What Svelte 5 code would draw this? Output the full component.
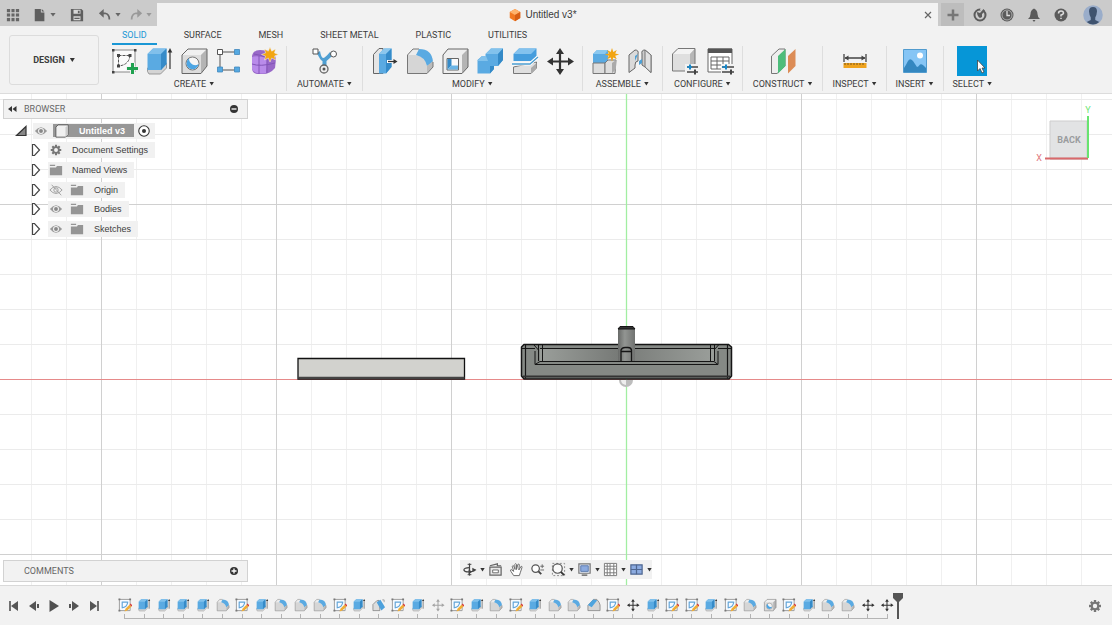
<script>
  let activeTab = $state('SOLID');
  let selectedNode = $state('Untitled v3');

  const tabs = ['SOLID', 'SURFACE', 'MESH', 'SHEET METAL', 'PLASTIC', 'UTILITIES'];

  const groups = [
    { name: 'CREATE', tools: ['sketch', 'extrude', 'hole', 'pattern', 'form'] },
    { name: 'AUTOMATE', tools: ['automate'] },
    { name: 'MODIFY', tools: ['pressPull', 'fillet', 'shell', 'combine', 'split', 'move'] },
    { name: 'ASSEMBLE', tools: ['component', 'joint'] },
    { name: 'CONFIGURE', tools: ['configure', 'configTable'] },
    { name: 'CONSTRUCT', tools: ['plane'] },
    { name: 'INSPECT', tools: ['measure'] },
    { name: 'INSERT', tools: ['picture'] },
    { name: 'SELECT', tools: ['select'] }
  ];

  const nodes = [
    { name: 'Document Settings', icon: 'gear' },
    { name: 'Named Views', icon: 'folder' },
    { name: 'Origin', icon: 'folder', eye: 'eyeOff' },
    { name: 'Bodies', icon: 'folder', eye: 'eye' },
    { name: 'Sketches', icon: 'folder', eye: 'eye' }
  ];

  const navTools = [
    { name: 'orbit', menu: true },
    { name: 'lookAt' },
    { name: 'pan' },
    { name: 'zoom' },
    { name: 'fit', menu: true },
    { name: 'display', menu: true },
    { name: 'grid', menu: true },
    { name: 'viewports', menu: true }
  ];

  const playback = ['first', 'previous', 'play', 'next', 'last'];

  // s = sketch, e = extrude, f = fillet, c = chamfer, d = draft, h = hole, m = move, x = suppressed move
  const features = [...'seeeefsefffsedsexsefseffcsmessesfhseffmm'];
  const featureIcons = {
    s: 'editSketch', e: 'extrude', f: 'fillet', c: 'chamfer',
    d: 'draft', h: 'hole', m: 'move', x: 'move'
  };

  const minorX = Array.from({ length: 32 }, (_, i) => 31 + i * 35).filter((x) => (x - 101) % 175 !== 0);
  const majorX = [101, 276, 451, 801, 976];
  const minorY = Array.from({ length: 14 }, (_, i) => 99 + i * 35).filter((y) => (y - 204) % 175 !== 0);
  const majorY = [204, 554];

  const icons = {
    sketch: `<path d="M4 4H26V26H4Z" fill="#fafafa" stroke="#888"/><path d="M9.5 9.5H21M9.5 9.5V20M21 9.5Q20 19 9.5 20" fill="none" stroke="#555" stroke-dasharray="3 1"/><path d="M3 3h2.5v2.5H3zM25 3h2.5v2.5H25zM3 25h2.5v2.5H3zM8 8h3v3H8zM19.500 8h3v3h-3zM8 18.500h3v3H8z" fill="#444"/><path d="M17 20.500h4v-4h5v4h4v4h-4v4h-5v-4h-4z" fill="#f2f2f2"/><path d="M18 21h4v-4h3v4h4v3h-4v4h-3v-4h-4z" fill="#20a150"/>`,
    editSketch: `<path d="M3 3H26V27H3Z" fill="#f7fbff" stroke="#999" stroke-width="2"/><path d="M8 9H21M9 8V21M21 8Q20 20 8 21" fill="none" stroke="#63a5d8" stroke-width="2.500"/><path d="M1 1h4v4H1zM24 1h4v4h-4zM1 25h4v4H1z" fill="#777"/><path d="M14 29l2-6 9-9 4 4-9 9z" fill="#f0ad36"/><path d="M25 14l2-2 4 4-2 2z" fill="#d93b3b"/>`,
    extrude: `<path d="M3.500 22V25.500L5 28H16.500L22.500 22V17Z" fill="#d4d4d4" stroke="#888" stroke-width=".8"/><path d="M3.500 8L9 2.500H22.500V18L17 24H3.500Z" fill="#5aaae2"/><path d="M3.500 8L9 2.500H22.500L17 8Z" fill="#81c0eb"/><path d="M17 8L22.500 2.500V18L17 24Z" fill="#368bc8"/><path d="M26 4V23" stroke="#333" stroke-width="1.200"/><path d="M26 2l2.300 4.500h-4.600z" fill="#333"/>`,
    hole: `<path d="M3 9L9 3H28V20L22 27.500H3Z" fill="#dcdcdc"/><path d="M3 9L9 3H28L22 9Z" fill="#f0f0f0"/><path d="M22 9L28 3V20L22 27Z" fill="#b4b4b4"/><path d="M3 9L9 3H28V20L22 27.500H3Z" fill="none" stroke="#666"/><circle cx="13.500" cy="17.500" r="6.500" fill="#f5f5f5" stroke="#777"/><path d="M10 12.500A6 6 0 1 0 19.500 18C16 21 10 18 10 12.500Z" fill="#4ca5e3"/>`,
    pattern: `<path d="M6 6H24M6 6V24H24" fill="none" stroke="#555"/><path d="M3.500 3.500h5v5h-5z" fill="#fff" stroke="#555"/><path d="M20.500 3.500h5v5h-5zM3.500 21h5v5h-5zM20.500 21h5v5h-5z" fill="#55a9e2" stroke="#4188bc" stroke-width=".8"/>`,
    form: `<path d="M3 10Q4 4 11 4L22 5Q26 8 27 13L26 22Q21 28 14 28H8Q3 27 3 22Z" fill="#9868c8"/><path d="M3 11Q7 9 18 12L17 27Q5 29 3 23Z" fill="#b98bea"/><path d="M3 18Q11 21 26 17M10 10V28M18 12V27M5 8Q13 9 18 12" fill="none" stroke="#8355b8"/><path d="M21 1l1.700 4.200L26.500 3l-1 4 4 1.500-4 1.500 1 4-3.800-2L21 16l-1.700-4-3.800 2 1-4-4-1.500 4-1.500-1-4 3.800 2.200z" fill="#f2a512" stroke="#f2f2f2" stroke-width=".5"/>`,
    automate: `<path d="M8 7Q11 14 13.500 15V22H17.500V15Q20 13 24 9L21 6Q16 12 14 12Q12 11 11 5Z" fill="#4f9fd2"/><path d="M4 3h5v5H4z" fill="#fff" stroke="#555"/><circle cx="24.500" cy="8" r="3" fill="#fff" stroke="#555"/><circle cx="15" cy="23" r="4" fill="#eee" stroke="#666" stroke-width="1.300"/><circle cx="15" cy="23" r="1.500" fill="#555"/>`,
    pressPull: `<path d="M3.500 8.500L9 2.500H13V27.500H3.500Z" fill="#e5e5e5" stroke="#666"/><path d="M9 8L14 2.500H21.500V21L16 27.500H9Z" fill="#5aaae2"/><path d="M9 8L14 2.500H21.500L16 8Z" fill="#8cc7ed"/><path d="M16 8L21.500 2.500V21L16 27.500Z" fill="#358bc9"/><path d="M17 15.500H25" stroke="#fff" stroke-width="3"/><path d="M18 15.500H24" stroke="#333" stroke-width="1.300"/><path d="M27.500 15.500l-4-2.500v5z" fill="#333"/>`,
    fillet: `<path d="M2.500 9L8 3H14Q27 3 28 15V21L22 27.500H2.500Z" fill="#ececec"/><path d="M2.500 9H10Q20 10 22 20V27.500H2.500Z" fill="#d6d6d6"/><path d="M14 3Q27 3 28 16L22 20Q20 11 11 9Z" fill="#5aaae2"/><path d="M22 20L28 15V21L22 27.500Z" fill="#bbb"/><path d="M14 3H8L2.500 9V27.500H22L28 21V16" fill="none" stroke="#777"/>`,
    chamfer: `<path d="M2 16L14 3H21Q27 9 28 15V27H2Z" fill="#d5d5d5" stroke="#777" stroke-width="1.500"/><path d="M2 15L13 3L22 5L10 20Z" fill="#4da4df"/>`,
    draft: `<path d="M2 25V14L10 6L15 5L17 27H2Z" fill="#ddd" stroke="#777" stroke-width="1.500"/><path d="M10 9L18 4L28 20L20 27Z" fill="#4da1dc"/><path d="M22 4h4v5" fill="none" stroke="#888" stroke-width="1.500"/>`,
    shell: `<path d="M3 9L8 3H28V21L22 27.500H3Z" fill="#eee"/><path d="M22 9L28 3V21L22 27.500Z" fill="#b4b4b4"/><path d="M3 9L8 3H28V21L22 27.500H3Z" fill="none" stroke="#666"/><path d="M7 12.500H18.500V24H7Z" fill="#fafafa" stroke="#666"/><path d="M7.500 13L11.500 13V19.500L7.500 23.500Z" fill="#368bc8"/><path d="M7.500 23.500L11.500 19.500H18V23.500Z" fill="#6bb5e6"/>`,
    combine: `<path d="M2.500 14L7 10H10.500V8L16 2.500H28V14L23 20H19V23L15 27.500H2.500Z" fill="#5aaae2"/><path d="M10.500 8L16 2.500H28L23 8ZM2.500 15L7 10H11L13 15Z" fill="#82c2ec"/><path d="M23 8L28 2.500V14L23 20ZM15 20H19V23L15 27.500Z" fill="#348ac7"/>`,
    split: `<path d="M3.500 21V27.500H21L26.500 22V16Z" fill="#dfdfdf" stroke="#777"/><path d="M21 22L26.500 17V22L21 27.500Z" fill="#aaa"/><path d="M3.500 8L9 2.500H26.500V10L21 15H3.500Z" fill="#459ddd"/><path d="M3.500 8L9 2.500H26.500L21 8Z" fill="#83c2ee"/><path d="M2 18H20L28 11" fill="none" stroke="#fff" stroke-width="3"/><path d="M2 18H20L28 11" fill="none" stroke="#4a9ccf" stroke-width="1.300"/>`,
    move: `<path d="M15 5V26M5 15.500H26" stroke="#333" stroke-width="2.200"/><path d="M15 2l4 6h-8zM15 29l4-6h-8zM2 15.500l6-4v8zM29 15.500l-6-4v8z" fill="#333"/>`,
    component: `<path d="M3 8L7 4H18V17H3Z" fill="#5aaae2"/><path d="M3 8L7 4H18L15 8Z" fill="#8bc8ef"/><path d="M3 17H15V27.500H3Z" fill="#ddd" stroke="#777"/><path d="M15 17L18 14H26L25 27.500H15Z" fill="#dedede" stroke="#777"/><path d="M22 17L26 14V23L22 27.500" fill="#aaa"/><path d="M22 2l1.300 4 3.500-2-1.600 3.500 4 1-4 1.200 1.600 3.500-3.500-1.600-1.300 4-1.300-4-3.500 1.600 1.600-3.500-4-1.200 4-1-1.600-3.500 3.500 2z" fill="#f2a512"/>`,
    joint: `<path d="M4 9L10 4Q14 4 13 8V15Q10 15 10 19V22L4 26.500Z" fill="#dadada" stroke="#666"/><path d="M26 9L20 4Q16 4 17 8V19L20 21L26 26.500Z" fill="#ccc" stroke="#666"/><path d="M20 4V21L26 26.500V9Z" fill="#e2e2e2" stroke="#777"/><path d="M10 15V10L13 8M17 13l-3 2v4l3-2z" fill="#4ca0d5"/>`,
    configure: `<path d="M2.500 8L8 2.500H25V19L20 25H2.500Z" fill="#dfdfdf"/><path d="M2.500 8L8 2.500H25L20 8Z" fill="#f3f3f3"/><path d="M20 8L25 2.500V19L20 25Z" fill="#b7b7b7"/><path d="M2.500 8L8 2.500H25V19L20 25H2.500Z" fill="none" stroke="#777"/><path d="M15 18H30V30H15Z" fill="#f2f2f2"/><path d="M17 21H28M17 26H28" stroke="#444" stroke-width="1.300"/><path d="M17 21h5" stroke="#1687c9" stroke-width="1.500"/><path d="M20 18.500v5" stroke="#1687c9" stroke-width="2"/><path d="M25 23.500v5" stroke="#444" stroke-width="2"/>`,
    configTable: `<path d="M3 3H27V26H3Z" fill="#fff" stroke="#666"/><path d="M3 2.500H27V7H3Z" fill="#555"/><path d="M6 11H24V23H6ZM6 15H24M6 19H24M12 11V23M18 11V23" fill="none" stroke="#666"/><path d="M16 18H30V30H16Z" fill="#f2f2f2"/><path d="M17 21H29M17 26H29" stroke="#444" stroke-width="1.300"/><path d="M17 21h5" stroke="#1687c9" stroke-width="1.500"/><path d="M21 18.500v5" stroke="#1687c9" stroke-width="2"/><path d="M26 23.500v5" stroke="#444" stroke-width="2"/>`,
    plane: `<path d="M3.500 10L11 3H17V20L9 27.500H3.500Z" fill="#eee" stroke="#777"/><path d="M10 10L17.500 3V20L10 27.500Z" fill="#4dbd7b"/><path d="M20 10L27.500 3V20L20 27.500Z" fill="#dc8c56"/>`,
    measure: `<path d="M4 8V16M26 8V16M5 12H25" stroke="#444" stroke-width="1.300"/><path d="M4.500 12l4-2.500v5zM25.500 12l-4-2.500v5z" fill="#444"/><path d="M3.500 17H26.500V22H3.500Z" fill="#efa31d"/><path d="M5 17v2M8 17v2M11 17v2M14 17v2M17 17v2M20 17v2M23 17v2" stroke="#7b561d"/>`,
    picture: `<path d="M3.500 3.500H26.500V26.500H3.500Z" fill="#86c5f5" stroke="#519bce"/><circle cx="20" cy="9.500" r="3" fill="#fff"/><path d="M4 22Q6 19 8 15Q10 11.500 13 15Q15 18 17 21Q18 21 20 18.500Q22 17 26 22V26H4Z" fill="#3487c0"/>`,
    select: `<path d="M0 0H30V30H0Z" fill="#0696d7"/><path d="M20.500 14V25L23 22.500L25 27L27 26L25 22H28Z" fill="#fff" stroke="#444" stroke-width=".8"/>`,

    apps: `<path d="M1 1h4v4H1zM6 1h4v4H6zM11 1h4v4h-4zM1 6h4v4H1zM6 6h4v4H6zM11 6h4v4h-4zM1 11h4v4H1zM6 11h4v4H6zM11 11h4v4h-4z" fill="#666"/><path d="M5.500 0V16M10.500 0V16M0 5.500H16M0 10.500H16" stroke="#cbcbcb"/>`,
    file: `<path d="M2 1H9V5H13V15H2ZM10 1L13 4H10Z" fill="#5f5f5f"/>`,
    save: `<path d="M1 1H13L15 3V15H1Z" fill="#5f5f5f"/><path d="M4 2H12V6.500H4ZM4 9.500H12V14H4Z" fill="#d6d6d6"/><path d="M9 3h2v3H9zM5 11h6v1.500H5z" fill="#5f5f5f"/>`,
    undo: `<path d="M4 6H8Q13 7 13 13" fill="none" stroke="#666" stroke-width="2"/><path d="M1 6L6.500 1V11Z" fill="#666"/>`,
    redo: `<path d="M12 6H8Q3 7 3 13" fill="none" stroke="#999" stroke-width="2"/><path d="M15 6L9.500 1V11Z" fill="#999"/>`,
    doc: `<path d="M8 1L14 4.500V11.500L8 15L2 11.500V4.500Z" fill="#f37921"/><path d="M8 1L14 4.500L8 8L2 4.500Z" fill="#ffb36d"/><path d="M8 8L14 4.500V11.500L8 15Z" fill="#d65e14"/>`,
    close: `<path d="M5 5L11 11M11 5L5 11" stroke="#666" stroke-width="1.200"/>`,
    plus: `<path d="M8 2.500V13.500M2.500 8H13.500" stroke="#777" stroke-width="2.500"/>`,
    extensions: `<circle cx="8" cy="8" r="5.500" fill="none" stroke="#5b5b5b" stroke-width="2"/><path d="M9 0L12 3L10 5L8 3Z" fill="#cbcbcb"/><path d="M5 5L8 6L11.500 2L13 4L10 7V10L8 11Q5 9 5 5Z" fill="#5b5b5b"/>`,
    clock: `<circle cx="8" cy="8" r="6.500" fill="#5b5b5b"/><circle cx="8" cy="8" r="5" fill="none" stroke="#ccc" stroke-width=".7"/><path d="M8 4V8.500H11" fill="none" stroke="#ddd" stroke-width="1.300"/>`,
    bell: `<path d="M2 12Q4.500 10 4.500 7Q4.500 3 8 1.500Q11.500 3 11.500 7Q11.500 10 14 12ZM6.500 13H9.500L8 15Z" fill="#5b5b5b"/>`,
    help: `<circle cx="8" cy="8" r="6.500" fill="#5b5b5b"/><path d="M5.500 6.500Q5.500 4 8 4Q10.500 4 10.500 6.200Q10 7.500 8 8V9.500M8 10.700V12" fill="none" stroke="#ddd" stroke-width="1.500"/>`,
    avatar: `<circle cx="8" cy="8" r="7.800" fill="#9aadca"/><path d="M4.800 5Q4.800 1.500 8 1.500Q11.200 1.500 11.200 5Q11 8 9.800 10V12L13 13.500Q8 17.500 3 13.500L6.200 12V10Q5 8 4.800 5Z" fill="#3f536f"/>`,

    eye: `<path d="M1 8Q8 -.5 15 8Q8 16.500 1 8Z" fill="#999"/><circle cx="8" cy="8" r="3.400" fill="#f3f3f3"/><circle cx="8" cy="8" r="2.200" fill="#888"/>`,
    eyeOff: `<path d="M1 8Q8 0 15 8Q8 16 1 8Z" fill="none" stroke="#999"/><circle cx="8" cy="8" r="2.500" fill="none" stroke="#999"/><path d="M3 2L14 14" stroke="#999"/>`,
    folder: `<path d="M1 2H7V3.500H1ZM1 5H8L9 3.500H15V14H1Z" fill="#959595"/>`,
    gear: `<path d="M8 2V14M2 8H14M3.800 3.800L12.200 12.200M12.200 3.800L3.800 12.200" stroke="#777" stroke-width="2.400"/><circle cx="8" cy="8" r="4.300" fill="#777"/><circle cx="8" cy="8" r="2.200" fill="#f3f3f3"/>`,
    body: `<path d="M1 3.500L3.500 1H15V12L12 15H1Z" fill="#f0f0f0" stroke="#555"/><path d="M12 4L14.500 1.500V12L12 14.500Z" fill="#ccc"/>`,
    target: `<circle cx="8" cy="8" r="6" fill="#fff" stroke="#333" stroke-width="1.200"/><circle cx="8" cy="8" r="2.300" fill="#333"/>`,
    open: `<path d="M13 3.500V12.500H3.500Z" fill="#888" stroke="#333" stroke-width="1.200"/>`,
    closed: `<path d="M4.500 2.500H6.500L11.500 8L6.500 13.500H4.500Z" fill="#fff" stroke="#444" stroke-width="1.200"/>`,
    collapse: `<path d="M8 5V11L4 8ZM12.500 5V11L8.500 8Z" fill="#333"/>`,
    minus: `<circle cx="8" cy="8" r="4" fill="#333"/><path d="M5.500 8H10.500" stroke="#fff" stroke-width="1.300"/>`,
    add: `<circle cx="8" cy="8" r="4" fill="#333"/><path d="M5.500 8H10.500M8 5.500V10.500" stroke="#fff" stroke-width="1.300"/>`,

    orbit: `<path d="M8 1.500V14.500" stroke="#444" stroke-width="1.300"/><path d="M6 2.500h4M6 13.500h4" stroke="#444"/><path d="M8 6Q2 6 2 8.500Q3 11 8 10.500Q14 10 14 8" fill="none" stroke="#444" stroke-width="1.300"/><path d="M15.500 8.500L11 6V10ZM7 8L11 10.500L7 13Z" fill="#444"/>`,
    lookAt: `<path d="M2 5.500H14V14H2Z" fill="#e8e8e8" stroke="#666" stroke-width="1.300"/><path d="M5 8.500H11V11.500H5Z" fill="#fff" stroke="#666"/><path d="M2 4L10 2V4H14" fill="none" stroke="#666" stroke-width="1.300"/>`,
    pan: `<path d="M5 14.500L2 10Q1 8 2.500 8L5 10L3.500 4.500Q4 3 5.200 4.500L6.500 8L6.200 2.500Q7 1 8 2.500V8L9.500 2.500Q10.700 1.500 11 3L10.500 8.500L13 4.500Q14.200 4.500 13.800 6L12 11.500L11 14.500Z" fill="#fff" stroke="#666"/>`,
    zoom: `<circle cx="6" cy="7" r="4" fill="#fff" stroke="#555" stroke-width="1.300"/><path d="M9 10L12 13" stroke="#444" stroke-width="2"/><path d="M11 4.500H15M13 2.500V6.500M11 8.500H15" stroke="#666"/>`,
    fit: `<path d="M1.500 1.500H14.500V14.500H1.500Z" fill="none" stroke="#888" stroke-dasharray="2 2"/><circle cx="7" cy="7" r="5" fill="#fafafa" stroke="#555" stroke-width="1.300"/><path d="M10.500 10.500L14 14" stroke="#333" stroke-width="2"/>`,
    display: `<path d="M2 2H14V12H2Z" fill="#e7eefb" stroke="#777" stroke-width="1.300"/><path d="M4 4H12V10H4Z" fill="#8cabe0" stroke="#5a79ab"/><path d="M5 14H11" stroke="#666" stroke-width="1.500"/>`,
    grid: `<path d="M1.500 1.500H14.500V14.500H1.500ZM4.500 2V14M7.500 2V14M11.500 2V14M2 4.500H14M2 7.500H14M2 11.500H14" fill="#fff" stroke="#777"/>`,
    viewports: `<path d="M2 3H14V13H2Z" fill="#8cabe0" stroke="#4f6791" stroke-width="1.300"/><path d="M8 3V13M2 8H14" stroke="#4f6791" stroke-width="1.300"/>`,

    first: `<path d="M4 3V13" stroke="#444" stroke-width="1.500"/><path d="M12 3V13L5 8Z" fill="#555"/>`,
    previous: `<path d="M10 3V13L3 8Z" fill="#555"/><path d="M12 6V10" stroke="#555" stroke-width="2"/>`,
    play: `<path d="M3.500 2V14L13 8Z" fill="#505050"/>`,
    next: `<path d="M6 3V13L13 8Z" fill="#555"/><path d="M4 6V10" stroke="#555" stroke-width="2"/>`,
    last: `<path d="M12 3V13" stroke="#444" stroke-width="1.500"/><path d="M4 3V13L11 8Z" fill="#555"/>`
  };
</script>

{#snippet icon(name, box = 16)}
  <svg class="icon" viewBox="0 0 {box} {box}" aria-hidden="true">{@html icons[name]}</svg>
{/snippet}

<div class="app">
  <!-- Title bar -->
  <header class="title-bar">
    <div class="file-tools">
      <button aria-label="Data panel">{@render icon('apps')}</button>
      <button aria-label="File">{@render icon('file')}<i class="caret"></i></button>
      <button aria-label="Save">{@render icon('save')}</button>
      <button aria-label="Undo">{@render icon('undo')}<i class="caret"></i></button>
      <button class="disabled" aria-label="Redo">{@render icon('redo')}<i class="caret"></i></button>
    </div>
    <div class="doc-tab">
      <span class="doc-name">{@render icon('doc')}Untitled v3*</span>
      <button aria-label="Close">{@render icon('close')}</button>
    </div>
    <div class="account-tools">
      <button class="new-tab" aria-label="New design">{@render icon('plus')}</button>
      <button aria-label="Extensions">{@render icon('extensions')}</button>
      <button aria-label="Job status">{@render icon('clock')}</button>
      <button aria-label="Notifications">{@render icon('bell')}</button>
      <button aria-label="Help">{@render icon('help')}</button>
      <button class="avatar" aria-label="Account">{@render icon('avatar')}</button>
    </div>
  </header>

  <!-- Ribbon -->
  <section class="ribbon">
    <button class="workspace">DESIGN<i class="caret"></i></button>
    <div class="ribbon-body">
      <nav class="tabs">
        {#each tabs as tab}
          <button class="tab" class:active={tab === activeTab} onclick={() => (activeTab = tab)}>{tab}</button>
        {/each}
      </nav>
      <div class="groups">
        {#each groups as group}
          <div class="group">
            <div class="tools">
              {#each group.tools as tool}
                <button class="tool" aria-label={tool}>{@render icon(tool, 30)}</button>
              {/each}
            </div>
            <button class="group-label">{group.name}<i class="caret"></i></button>
          </div>
        {/each}
      </div>
    </div>
  </section>

  <!-- Canvas -->
  <main class="viewport">
    <svg class="scene" viewBox="0 94 1112 491" preserveAspectRatio="xMidYMid slice" aria-hidden="true">
      <defs>
        <linearGradient id="metal">
          <stop offset="0" stop-color="#9a9e9a" />
          <stop offset=".45" stop-color="#777a77" />
          <stop offset="1" stop-color="#9a9e9a" />
        </linearGradient>
        <linearGradient id="post">
          <stop offset="0" stop-color="#686a68" />
          <stop offset=".4" stop-color="#929592" />
          <stop offset="1" stop-color="#707270" />
        </linearGradient>
      </defs>
      {#each minorX as x}<path d="M{x + 0.5} 94V585" stroke="#f0f0f0" />{/each}
      {#each minorY as y}<path d="M0 {y + 0.5}H1112" stroke="#ebebeb" />{/each}
      {#each majorX as x}<path d="M{x + 0.5} 94V585" stroke="#d0d0d0" />{/each}
      {#each majorY as y}<path d="M0 {y + 0.5}H1112" stroke="#d0d0d0" />{/each}
      <rect x="0" y="379" width="1112" height="1" fill="#e68a8a" />
      <path d="M626.500 94V585" stroke="#a2eea2" stroke-width="1.300" />

      <path d="M298 358.500H464.500V379H298Z" fill="#d2d2ce" stroke="#111" stroke-width="1.300" />
      <path d="M298 377.800H464.500" stroke="#444" stroke-width="2" />

      <path d="M619 380A7 7 0 0 0 633 380Z" fill="#bdbdbd" />
      <path d="M621 380A5 5 0 0 0 626 385V380Z" fill="#eee" />
      <g stroke="#151515" fill="none">
        <path d="M524 344.500H728.500L731.500 347V376L729 379H524L521.500 376V347Z" fill="#858985" stroke-width="1.500" />
        <path d="M540 348.500H714V361.500H540Z" fill="url(#metal)" stroke="none" />
        <path d="M521.500 348.500H535M540 348.500H714M718 348.500H731.500" />
        <path d="M525.500 345V378.500M727.500 345V378.500" stroke-width="1.200" />
        <path d="M534 345L538.500 350M718.500 345L714 350M535 351V364.500M718 351V364.500M538.500 345V361M542.500 345V361M714.500 345V361M710.500 345V361" />
        <path d="M535 364.500L540 361.500H714L718 364.500H535" />
        <path d="M523 376.500H730" stroke-width="2" stroke="#333" />
        <path d="M618 328H635V361H618Z" fill="url(#post)" stroke="none" />
        <path d="M618 329L620 326.500H633L635 329Z" fill="#333" />
        <path d="M621 361V350Q622 347.500 625 347.500H628Q631 347.500 631.500 350V361M621 351.500H631.500" stroke-width="1.300" />
      </g>
    </svg>

    <div class="overlay">
      <aside class="browser">
        <div class="panel">
          <button aria-label="Collapse">{@render icon('collapse')}</button>
          <span class="panel-title">BROWSER</span>
          <button aria-label="Hide">{@render icon('minus')}</button>
        </div>
        <ul class="tree">
          <li class="root">
            <button aria-label="Collapse Untitled v3">{@render icon('open')}</button>
            <div class="node">
              <button aria-label="Visibility">{@render icon('eye')}</button>
              <button
                class="node-name"
                class:selected={selectedNode === 'Untitled v3'}
                onclick={() => (selectedNode = 'Untitled v3')}
              >{@render icon('body')}<span>Untitled v3</span></button>
              <button aria-label="Activate">{@render icon('target')}</button>
            </div>
          </li>
          {#each nodes as node}
            <li>
              <button aria-label="Expand {node.name}">{@render icon('closed')}</button>
              <div class="node">
                {#if node.eye}
                  <button aria-label="Visibility">{@render icon(node.eye)}</button>
                {/if}
                <button class="node-name">{@render icon(node.icon)}<span>{node.name}</span></button>
              </div>
            </li>
          {/each}
        </ul>
      </aside>

      <button class="view-cube" aria-label="View cube, back">
        <svg viewBox="0 0 60 60" width="60" height="60">
          <path d="M15 17H52V54H15Z" fill="#e2e3e4" stroke="#cdcdcd" />
          <path d="M53 17V54M15 55H53" stroke="#b5b5b5" />
          <path d="M10 54.500H53" stroke="#d9686b" stroke-width="2" />
          <path d="M53 12V54" stroke="#68e470" stroke-width="2" />
          <text x="34" y="39" class="face">BACK</text>
          <text x="4" y="57" class="axis-x">X</text>
          <text x="53" y="9" class="axis-y">Y</text>
        </svg>
      </button>

      <div class="bottom-row">
        <div class="panel comments">
          <span class="panel-title">COMMENTS</span>
          <button aria-label="Add comment">{@render icon('add')}</button>
        </div>
        <div class="nav-bar">
          {#each navTools as tool}
            <button aria-label={tool.name}>{@render icon(tool.name)}{#if tool.menu}<i class="caret"></i>{/if}</button>
          {/each}
        </div>
      </div>
    </div>
  </main>

  <!-- Timeline -->
  <footer class="timeline">
    <div class="playback">
      {#each playback as step}
        <button aria-label={step}>{@render icon(step)}</button>
      {/each}
    </div>
    <div class="history">
      <ol class="features">
        {#each features as feature}
          <li class:suppressed={feature === 'x'}>
            <button aria-label={featureIcons[feature]}>{@render icon(featureIcons[feature], 30)}</button>
          </li>
        {/each}
      </ol>
      <div class="track"></div>
    </div>
    <svg class="marker" viewBox="0 0 12 28" aria-hidden="true">
      <path d="M1 1H11V6L7 10V27H5V10L1 6Z" fill="#555" />
    </svg>
    <button class="settings" aria-label="Timeline settings">{@render icon('gear')}</button>
  </footer>
</div>

<style>
  :global(body) {
    margin: 0;
  }

  .app {
    display: flex;
    flex-direction: column;
    min-height: 100vh;
    background: #f2f2f2;
    color: #3c3c3c;
    font-family: Roboto, 'Liberation Sans', sans-serif;
    font-size: 9px;
    line-height: 12px;
  }

  button {
    display: flex;
    align-items: center;
    justify-content: center;
    margin: 0;
    padding: 0;
    border: 0;
    background: none;
    color: inherit;
    font: inherit;
    white-space: nowrap;
  }

  .icon {
    display: block;
    flex: none;
    width: 16px;
    height: 16px;
  }

  .caret {
    flex: none;
    width: 5px;
    height: 4px;
    background: #333;
    clip-path: polygon(0 0, 100% 0, 50% 100%);
  }

  /* Title bar */
  .title-bar {
    display: flex;
    height: 23px;
    padding-top: 3px;
    background: #cbcbcb;
  }

  .file-tools {
    display: flex;
    align-items: center;
    gap: 8px;
    width: 151px;
    padding-left: 6px;
  }

  .file-tools .icon {
    width: 14px;
    height: 14px;
  }

  .file-tools button {
    gap: 3px;
  }

  .file-tools button:nth-child(2) {
    margin-left: 5px;
  }

  .file-tools button:nth-child(3),
  .file-tools button:nth-child(4) {
    margin-left: 6px;
  }

  .file-tools .caret {
    width: 6px;
    background: #666;
  }

  .file-tools .disabled .caret {
    background: #999;
  }

  .doc-tab {
    display: flex;
    flex: 1;
    align-items: center;
    padding-right: 2px;
    background: #f2f2f2;
  }

  .doc-name {
    display: flex;
    flex: 1;
    align-items: center;
    justify-content: center;
    gap: 3px;
    padding-left: 8px;
    font-family: 'Liberation Sans', sans-serif;
    font-size: 10px;
  }

  .doc-name .icon {
    width: 14px;
    height: 14px;
  }

  .account-tools {
    display: flex;
    align-items: center;
    gap: 11px;
    padding: 0 9px 0 3px;
  }

  .account-tools .new-tab {
    width: 23px;
    height: 23px;
    margin-right: -3px;
    background: #bdbdbd;
  }

  .avatar .icon {
    width: 20px;
    height: 20px;
  }

  .avatar {
    margin-left: 3px;
  }

  /* Ribbon */
  .ribbon {
    display: flex;
    gap: 3px;
    padding: 1px 0 2px;
    border-bottom: 1px solid #dcdcdc;
  }

  .workspace {
    gap: 5px;
    width: 90px;
    margin: 8px 0 6px 9px;
    border: 1px solid #dcdcdc;
    border-radius: 3px;
    font-weight: 700;
  }

  .ribbon-body {
    flex: 1;
  }

  .tabs {
    display: flex;
    gap: 17px;
    padding-left: 10px;
  }

  .tab {
    height: 18px;
    padding: 0 10px;
    border-bottom: 2px solid transparent;
  }

  .tab.active {
    border-bottom-color: #1a97d5;
    color: #1a97d5;
  }

  .groups {
    display: flex;
    padding-top: 1px;
  }

  .group {
    display: flex;
    flex-direction: column;
    align-items: center;
    padding: 0 4px;
    border-right: 1px solid #dedede;
  }

  .group:nth-child(n + 7) {
    padding: 0 3px;
  }

  .group:last-child {
    border-right: 0;
  }

  .tools {
    display: flex;
    gap: 5px;
    padding: 0 3px;
  }

  .tool .icon {
    width: 30px;
    height: 30px;
  }

  .group-label {
    gap: 3px;
    height: 15px;
    padding: 0 6px;
  }

  /* Canvas */
  .viewport {
    position: relative;
    display: flex;
    flex: 1;
    background: #fff;
  }

  .scene {
    position: absolute;
    inset: 0;
    width: 100%;
    height: 100%;
  }

  .overlay {
    position: relative;
    display: flex;
    flex: 1;
    flex-direction: column;
    justify-content: space-between;
    padding: 5px 3px 3px;
  }

  .panel {
    display: flex;
    align-items: center;
    width: 243px;
    height: 18px;
    border: 1px solid #d2d2d2;
    background: #f2f2f2;
    color: #666;
  }

  .panel-title {
    flex: 1;
    padding-left: 4px;
  }

  .panel button:last-child {
    margin-right: 5px;
  }

  .comments {
    height: 20px;
  }

  .comments .panel-title {
    padding-left: 20px;
  }

  .tree {
    display: grid;
    grid-auto-rows: 1fr;
    height: 118px;
    margin: 2px 0 0;
    padding: 0 0 0 25px;
    list-style: none;
    font-family: 'Liberation Sans', sans-serif;
  }

  .tree li {
    display: flex;
    align-items: center;
    gap: 4px;
  }

  .tree .root {
    margin-left: -15px;
  }

  .node {
    display: flex;
    align-items: center;
    gap: 5px;
    height: 16px;
    padding: 0 7px 0 1px;
    background: #f1f1f1;
  }

  .node .icon {
    width: 14px;
    height: 14px;
  }

  .node-name {
    gap: 9px;
  }

  .node button + .node-name {
    gap: 10px;
    padding-left: 2px;
  }

  .root .node {
    gap: 3px;
    padding-right: 4px;
  }

  .root .node-name {
    height: 13px;
    margin-left: 2px;
    padding-right: 9px;
  }

  .node-name.selected {
    background: #979797;
    color: #fff;
    font-weight: 700;
  }

  .view-cube {
    position: absolute;
    top: 10px;
    right: 17px;
  }

  .face,
  .axis-x,
  .axis-y {
    font-family: Roboto, sans-serif;
    font-size: 9px;
    text-anchor: middle;
  }

  .face {
    fill: #9a9c9e;
    font-weight: 700;
  }

  .axis-x {
    fill: #e0777b;
  }

  .axis-y {
    fill: #70e678;
  }

  .bottom-row {
    display: grid;
    grid-template-columns: 1fr auto 1fr;
  }

  .nav-bar {
    display: flex;
    align-items: center;
    gap: 1px;
    height: 19px;
    background: #f1f1f1;
  }

  .nav-bar button {
    padding: 0 2px;
  }

  .nav-bar .icon {
    width: 15px;
    height: 15px;
    padding-right: 1px;
  }

  .nav-bar .caret {
    margin-right: -2px;
    margin-left: 2px;
  }

  /* Timeline */
  .timeline {
    display: flex;
    align-items: center;
    height: 39px;
    border-top: 1px solid #d9d9d9;
  }

  .playback {
    display: flex;
    gap: 4px;
    padding: 0 13px 0 6px;
  }

  .history {
    flex: 0 1 782px;
    padding-top: 5px;
  }

  .features {
    display: flex;
    margin: 0;
    padding: 0;
    list-style: none;
  }

  .features li {
    display: flex;
    flex: 1;
    flex-direction: column;
    align-items: center;
  }

  .features .icon {
    width: 14px;
    height: 14px;
  }

  .features li::after {
    width: 1px;
    height: 4px;
    margin-top: 2px;
    background: #b4b4b4;
    content: '';
  }

  .suppressed .icon {
    opacity: 0.4;
  }

  .track {
    margin: 0 9px;
    border-top: 1px solid #b4b4b4;
  }

  .marker {
    width: 12px;
    height: 28px;
    margin-left: -5px;
  }

  .settings {
    margin: 0 9px 0 auto;
  }
</style>
